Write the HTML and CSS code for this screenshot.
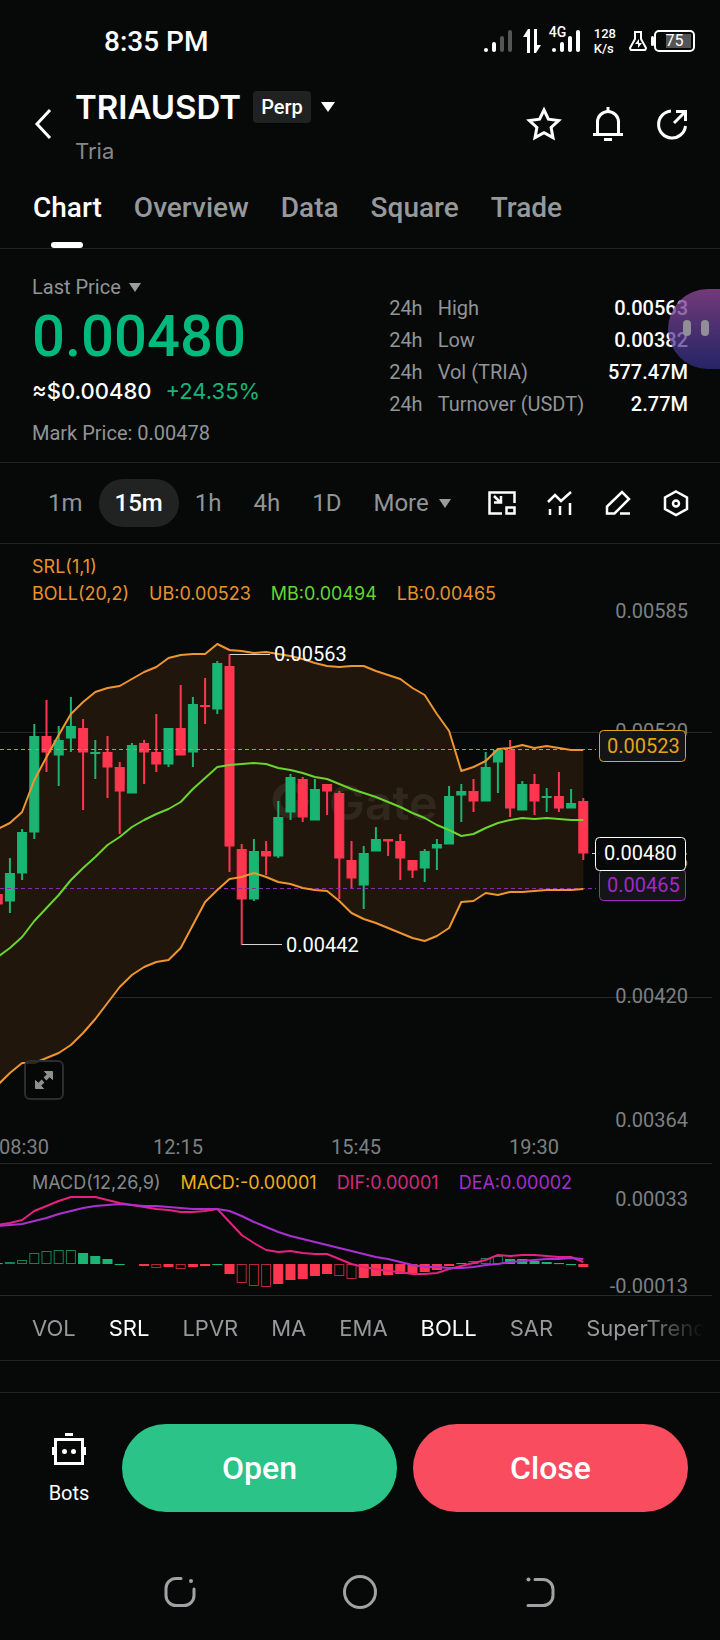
FILE: index.html
```html
<!doctype html>
<html lang="en">
  <head>
    <meta charset="UTF-8" />
    <meta name="viewport" content="width=device-width, initial-scale=1.0" />
    <title>TRIAUSDT Perp</title>
    <link rel="stylesheet" href="styles.css">
  </head>
  <body>
    <div class="status-bar">
      <span class="clock">8:35 PM</span>
      <div class="status-icons">
        <svg width="30" height="24" viewBox="0 0 30 24" fill="#fff">
          <circle cx="3" cy="21" r="2" />
          <rect x="9" y="13" width="4" height="10" rx="2" />
          <rect x="17" y="7" width="4" height="16" rx="2" fill="#555" />
          <rect x="25" y="1" width="4" height="22" rx="2" fill="#555" />
        </svg>
        <svg width="18" height="24" viewBox="0 0 18 24" fill="#fff">
          <path d="M0 8L5 0h2v24H4V8zM11 0h3v16h4l-5 8h-2z" />
        </svg>
        <div class="mobile">
          <span class="mobile-type">4G</span>
          <svg width="30" height="24" viewBox="0 0 30 24" fill="#fff">
            <circle cx="3" cy="21" r="2" />
            <rect x="9" y="13" width="4" height="10" rx="2" />
            <rect x="17" y="7" width="4" height="16" rx="2" />
            <rect x="25" y="1" width="4" height="22" rx="2" />
          </svg>
        </div>
        <span class="speed">128<br />K/s</span>
        <svg width="18" height="20" viewBox="0 0 18 20" fill="none" stroke="#fff" stroke-width="2">
          <path d="M5 1h8M6 1v7L1 17q0 1 1 2h14q1-1 1-2L12 8V1" />
          <path d="M10 8l-4 5h3v4l4-5h-3z" fill="#fff" stroke="none" />
        </svg>
        <div class="battery"><span>75</span></div>
      </div>
    </div>

    <header class="header">
      <button class="icon-btn back" aria-label="Back">
        <svg width="18" height="32" viewBox="0 0 18 32" fill="none" stroke="#fff" stroke-width="3">
          <path d="M16 2L3 16l13 14" />
        </svg>
      </button>
      <div class="pair">
        <div class="pair-row">
          <h1>TRIAUSDT</h1>
          <span class="badge">Perp</span>
          <svg width="14" height="10" viewBox="0 0 14 10" fill="#fff"><path d="M0 0h14L7 10z" /></svg>
        </div>
        <p>Tria</p>
      </div>
      <div class="header-actions">
        <button class="icon-btn" aria-label="Favourite">
          <svg width="36" height="36" viewBox="0 0 36 36" fill="none" stroke="#fff" stroke-width="3">
            <path d="M18 4l4.400 9.200 10.200 1.300-7.500 7 1.900 10.100-9-4.900-9 4.900 1.900-10.100-7.500-7 10.200-1.300z" />
          </svg>
        </button>
        <button class="icon-btn" aria-label="Alerts">
          <svg width="36" height="36" viewBox="0 0 36 36" fill="none" stroke="#fff" stroke-width="3">
            <path d="M18 1v4M7.500 29V16a10.500 10.500 0 0 1 21 0v13M3 28.500h30M14 33.500h8" />
          </svg>
        </button>
        <button class="icon-btn" aria-label="Share">
          <svg width="36" height="36" viewBox="0 0 36 36" fill="none" stroke="#fff" stroke-width="3">
            <path d="M17 5a13.500 13.500 0 1 0 14.500 15M20 17L31 6M22 5.500h9.500V15" />
          </svg>
        </button>
      </div>
    </header>

    <nav class="tabs">
      <a href="#chart" class="active">Chart</a>
      <a href="#overview">Overview</a>
      <a href="#data">Data</a>
      <a href="#square">Square</a>
      <a href="#trade">Trade</a>
    </nav>

    <section class="ticker">
      <div class="price-box">
        <button class="price-type">
          Last Price
          <svg width="12" height="9" viewBox="0 0 12 9" fill="#9a9c9d"><path d="M0 0h12L6 9z" /></svg>
        </button>
        <div class="price">0.00480</div>
        <div class="price-sub"><span>≈$0.00480</span><span class="up">+24.35%</span></div>
        <div class="mark">Mark Price: 0.00478</div>
      </div>
      <table class="stats">
        <tr><td>24h</td><td>High</td><th>0.00563</th></tr>
        <tr><td>24h</td><td>Low</td><th>0.00382</th></tr>
        <tr><td>24h</td><td>Vol (TRIA)</td><th>577.47M</th></tr>
        <tr><td>24h</td><td>Turnover (USDT)</td><th>2.77M</th></tr>
      </table>
      <button class="assistant" aria-label="Assistant"><i></i><i></i></button>
    </section>

    <div class="intervals">
      <button>1m</button>
      <button class="active">15m</button>
      <button>1h</button>
      <button>4h</button>
      <button>1D</button>
      <button>
        More
        <svg width="12" height="9" viewBox="0 0 12 9" fill="#9a9c9d"><path d="M0 0h12L6 9z" /></svg>
      </button>
      <div class="chart-tools">
        <button class="icon-btn" aria-label="Floating window">
          <svg width="28" height="28" viewBox="0 0 28 28" fill="none" stroke="#fff" stroke-width="2.500">
            <path d="M14 24.500H1.500v-21h25V14" />
            <path d="M18.500 18.500h8v6h-8z" />
            <path d="M6 7l6 6M13 7v6.500H6" />
          </svg>
        </button>
        <button class="icon-btn" aria-label="Indicators">
          <svg width="28" height="28" viewBox="0 0 28 28" fill="none" stroke="#fff" stroke-width="2.500">
            <path d="M2 13l7-7 6 6L25 3" />
            <path d="M4 20v6M14 17v9M24 14v12" />
          </svg>
        </button>
        <button class="icon-btn" aria-label="Draw">
          <svg width="28" height="28" viewBox="0 0 28 28" fill="none" stroke="#fff" stroke-width="2.500">
            <path d="M3 24.500v-7L18 3l7 7-14.500 14.500zM16 24.500h10" />
          </svg>
        </button>
        <button class="icon-btn" aria-label="Chart settings">
          <svg width="28" height="28" viewBox="0 0 28 28" fill="none" stroke="#fff" stroke-width="2.500">
            <path d="M14 2.500l11 6v11.500l-11 6-11-6V8.500z" />
            <circle cx="14" cy="14.500" r="3" />
          </svg>
        </button>
      </div>
    </div>

    <main class="chart" id="chart">
      <div class="legend main-legend">
        <div class="legend-row"><span class="orange">SRL(1,1)</span></div>
        <div class="legend-row">
          <span class="orange">BOLL(20,2)</span>
          <span class="orange">UB:0.00523</span>
          <span class="lime">MB:0.00494</span>
          <span class="orange">LB:0.00465</span>
        </div>
      </div>
      <div class="kline-box">
        <svg class="kline" viewBox="0 604 720 560">
          <g class="grid">
            <path d="M0 732.500h712M0 997.500h712M0 1163.500h712" />
          </g>
          <g class="axis">
            <text x="688" y="618">0.00585</text>
            <text x="688" y="738">0.00530</text>
            <text x="688" y="868">0.00475</text>
            <text x="688" y="1003">0.00420</text>
            <text x="688" y="1127">0.00364</text>
          </g>
          <g class="axis time">
            <text x="24" y="1154">08:30</text>
            <text x="178" y="1154">12:15</text>
            <text x="356" y="1154">15:45</text>
            <text x="534" y="1154">19:30</text>
          </g>
          <path id="band" class="band" />
          <g class="watermark">
            <path d="M301 791a14 14 0 1 0 3 13h-13" />
            <text x="329" y="820">Gate</text>
          </g>
          <g id="candles"></g>
          <path class="dash-yellow" d="M0 749.500h596" />
          <path class="dash-purple" d="M0 888.500h596" />
          <path id="upper" class="line orange-line" />
          <path id="middle" class="line lime-line" />
          <path id="lower" class="line orange-line" />
          <path class="pointer" d="M230 654.500h40M242 944.500h40M592 853.500h3" />
          <g class="pointer-text">
            <text x="274" y="661">0.00563</text>
            <text x="286" y="952">0.00442</text>
          </g>
          <g class="tag yellow">
            <rect x="599.500" y="730.500" width="86" height="31" rx="4" />
            <text x="607" y="753">0.00523</text>
          </g>
          <g class="tag purple">
            <rect x="599.500" y="869.500" width="86" height="31" rx="4" />
            <text x="607" y="892">0.00465</text>
          </g>
          <g class="tag white">
            <rect x="595.500" y="837.500" width="90" height="33" rx="4" />
            <text x="604" y="860">0.00480</text>
          </g>
        </svg>
        <button class="expand" aria-label="Full screen">
          <svg width="20" height="20" viewBox="0 0 20 20" fill="#8d8f90" stroke="#8d8f90">
            <path d="M10.500 1.500h8v8zM1.500 10.500v8h8z" />
            <path d="M15 5l-4 4M5 15l4-4" stroke-width="4" />
          </svg>
        </button>
      </div>
      <div class="legend macd-legend">
        <div class="legend-row">
          <span class="gray">MACD(12,26,9)</span>
          <span class="gold">MACD:-0.00001</span>
          <span class="pink">DIF:0.00001</span>
          <span class="violet">DEA:0.00002</span>
        </div>
      </div>
      <svg class="macd" viewBox="0 1192 720 104">
        <path class="grid" d="M0 1295.500h712" />
        <g class="axis">
          <text x="688" y="1206">0.00033</text>
          <text x="688" y="1293">-0.00013</text>
        </g>
        <g id="bars"></g>
        <path id="dif" class="line pink-line" />
        <path id="dea" class="line violet-line" />
      </svg>
    </main>

    <div class="indicator-bar">
      <div class="indicators">
        <button>VOL</button>
        <button class="active">SRL</button>
        <button>LPVR</button>
        <button>MA</button>
        <button>EMA</button>
        <button class="active">BOLL</button>
        <button>SAR</button>
        <button>SuperTrend</button>
      </div>
    </div>

    <footer class="trade-bar">
      <button class="bots">
        <svg width="36" height="36" viewBox="0 0 36 36" fill="none" stroke="#fff" stroke-width="3">
          <path d="M4.500 8.500h27v24h-27zM14 3.500h8M2.500 16v8M33.500 16v8" />
          <circle cx="13.500" cy="20.500" r="2.500" fill="#fff" stroke="none" />
          <circle cx="22.500" cy="20.500" r="2.500" fill="#fff" stroke="none" />
        </svg>
        Bots
      </button>
      <button class="trade-btn open">Open</button>
      <button class="trade-btn close">Close</button>
    </footer>

    <div class="system-nav">
      <button class="icon-btn" aria-label="Recent apps">
        <svg width="36" height="36" viewBox="0 0 36 36" fill="none" stroke="#a0a2a3" stroke-width="3" stroke-linecap="round">
          <path d="M19 4.500h-5A10 10 0 0 0 4 14.500v7a10 10 0 0 0 10 10h8a10 10 0 0 0 10-10V15" />
          <circle cx="29" cy="7" r="2" fill="#a0a2a3" stroke="none" />
        </svg>
      </button>
      <button class="icon-btn" aria-label="Home">
        <svg width="36" height="36" viewBox="0 0 36 36" fill="none" stroke="#a0a2a3" stroke-width="3">
          <circle cx="18" cy="18" r="15.500" />
        </svg>
      </button>
      <button class="icon-btn" aria-label="System back">
        <svg width="36" height="36" viewBox="0 0 36 36" fill="none" stroke="#a0a2a3" stroke-width="3" stroke-linecap="round">
          <path d="M13 5.500h8a10 10 0 0 1 10 10v6a10 10 0 0 1-10 10H6" />
          <circle cx="6.500" cy="5.500" r="2" fill="#a0a2a3" stroke="none" />
        </svg>
      </button>
    </div>
    <script src="chart.js"></script>
  </body>
</html>
```
FILE: styles.css
```css
* {
  margin: 0;
  padding: 0;
  box-sizing: border-box;
}

body {
  font-family: Roboto, sans-serif;
  background: #060908;
  color: #fff;
}

button {
  font: inherit;
  color: inherit;
  background: none;
  border: none;
  cursor: pointer;
}

a {
  color: inherit;
  text-decoration: none;
}

svg {
  display: block;
}

.icon-btn {
  display: flex;
}

/* status bar */
.status-bar {
  display: flex;
  justify-content: space-between;
  align-items: center;
  height: 80px;
  padding: 2px 25px 0 104px;
}

.clock {
  font-size: 28px;
  font-weight: 500;
}

.status-icons {
  display: flex;
  align-items: center;
  gap: 10px;
}

.mobile {
  position: relative;
}

.mobile-type {
  position: absolute;
  top: -4px;
  left: -2px;
  font-size: 14px;
  line-height: 14px;
  font-weight: 500;
}

.speed {
  margin: 0 3px;
  font-size: 13px;
  line-height: 15px;
  font-weight: 500;
}

.battery {
  position: relative;
  width: 41px;
  height: 22px;
  margin-left: -3px;
  padding: 2px;
  border: 2px solid #fff;
  border-radius: 5px;
}

.battery::before {
  content: '';
  position: absolute;
  left: -5px;
  top: 4px;
  width: 3px;
  height: 10px;
  border-radius: 2px;
  background: #fff;
}

.battery span {
  display: block;
  height: 14px;
  background: linear-gradient(90deg, transparent 25%, #555 25%);
  font-size: 16px;
  line-height: 14px;
  text-align: center;
}

/* header */
.header {
  display: flex;
  align-items: center;
  height: 88px;
  padding: 0 30px 0 34px;
}

.pair {
  flex: 1;
  padding: 10px 0 0 23px;
}

.pair-row {
  display: flex;
  align-items: center;
  gap: 10px;
}

.pair h1 {
  font-family: Inter, sans-serif;
  font-size: 33px;
  line-height: 44px;
  font-weight: 600;
}

.badge {
  margin-left: 2px;
  padding: 0 8px;
  border-radius: 4px;
  background: #202222;
  font-size: 20px;
  line-height: 32px;
  font-weight: 500;
}

.pair p {
  font-family: Inter, sans-serif;
  font-size: 22px;
  line-height: 44px;
  color: #85888a;
}

.header-actions {
  display: flex;
  gap: 28px;
}

/* tabs */
.tabs {
  display: flex;
  gap: 32px;
  height: 81px;
  padding: 0 33px;
  border-bottom: 1px solid #202323;
  font-size: 28px;
  line-height: 80px;
  font-weight: 500;
  color: #96989a;
}

.tabs .active {
  position: relative;
  color: #fff;
}

.tabs .active::after {
  content: '';
  position: absolute;
  left: 50%;
  bottom: 0;
  width: 32px;
  height: 6px;
  margin-left: -16px;
  border-radius: 3px;
  background: #fff;
}

/* ticker */
.ticker {
  position: relative;
  display: flex;
  justify-content: space-between;
  padding: 22px 32px 9px;
  border-bottom: 1px solid #202323;
  font-size: 20px;
  line-height: 32px;
  color: #929496;
}

.price-type {
  display: flex;
  align-items: center;
  gap: 8px;
}

.price {
  font-size: 58px;
  line-height: 66px;
  font-weight: 500;
  color: #00b97c;
}

.price-sub {
  display: flex;
  gap: 14px;
  font-family: Inter, sans-serif;
  font-size: 22px;
  line-height: 44px;
  font-weight: 500;
  color: #fff;
}

.price-sub .up {
  font-weight: 400;
  color: #18b37a;
}

.mark {
  line-height: 40px;
}

.stats {
  align-self: flex-start;
  margin-top: 21px;
  border-collapse: collapse;
}

.stats td {
  padding-right: 15px;
}

.stats td:nth-child(2) {
  padding-right: 24px;
}

.stats th {
  font-weight: 500;
  text-align: right;
  color: #fff;
}

.assistant {
  position: absolute;
  right: 0;
  top: 40px;
  display: flex;
  gap: 10px;
  width: 52px;
  height: 80px;
  padding: 31px 0 0 15px;
  border-radius: 40px 0 0 40px;
  background: linear-gradient(rgba(140, 70, 150, 0.8), rgba(50, 48, 140, 0.7));
}

.assistant i {
  width: 8px;
  height: 16px;
  border-radius: 4px;
  background: #918e98;
}

/* intervals */
.intervals {
  display: flex;
  align-items: center;
  height: 81px;
  padding: 0 30px 0 32px;
  border-bottom: 1px solid #202323;
  font-size: 24px;
  line-height: 48px;
  color: #929496;
}

.intervals > button {
  display: flex;
  align-items: center;
  gap: 10px;
  padding: 0 16px;
  border-radius: 24px;
}

.intervals .active {
  background: #212323;
  color: #fff;
  font-weight: 500;
}

.chart-tools {
  display: flex;
  flex: 1;
  justify-content: flex-end;
  gap: 30px;
}

/* chart */
.legend {
  padding: 0 32px;
  font-family: Inter, sans-serif;
  font-size: 18px;
}

.legend-row {
  display: flex;
  gap: 20px;
}

.main-legend {
  height: 60px;
  padding-top: 9px;
  line-height: 27px;
}

.macd-legend {
  height: 28px;
  line-height: 37px;
}

.orange {
  color: #e8922e;
}

.lime {
  color: #62d733;
}

.gray {
  color: #85888a;
}

.gold {
  color: #f0ae1d;
}

.pink {
  color: #d02a80;
}

.violet {
  color: #a32fc9;
}

.kline-box {
  position: relative;
}

.kline,
.macd {
  width: 100%;
  height: auto;
  overflow: visible;
  font-size: 20px;
}

.grid {
  stroke: #25292a;
}

.axis {
  fill: #7d8082;
  text-anchor: end;
}

.time {
  text-anchor: middle;
}

.band {
  fill: #20160b;
}

.watermark {
  fill: #fff;
  opacity: 0.07;
  font-family: Inter, sans-serif;
  font-size: 48px;
  font-weight: 600;
}

.watermark path {
  fill: none;
  stroke: #fff;
  stroke-width: 8;
}

.green-bar {
  fill: #1bb473;
  stroke: #1bb473;
}

.red-bar {
  fill: #ff3650;
  stroke: #ff3650;
}

.wick {
  stroke-width: 2;
}

.hollow {
  fill: none;
  opacity: 0.7;
}

.line {
  fill: none;
  stroke-width: 2;
  stroke-linejoin: round;
}

.orange-line {
  stroke: #ee9530;
}

.lime-line {
  stroke: #6ad52e;
}

.pink-line {
  stroke: #e6217f;
}

.violet-line {
  stroke: #ac2fd4;
}

.dash-yellow,
.dash-purple {
  stroke: #c8961f;
  stroke-dasharray: 4 3;
}

.dash-purple {
  stroke: #8f28ae;
}

.pointer {
  stroke: #d5d5d5;
}

.pointer-text {
  fill: #fff;
}

.tag rect {
  fill: #131516;
}

.yellow rect {
  stroke: #e3a41c;
}

.yellow text {
  fill: #e3a41c;
}

.purple rect {
  stroke: #a229c7;
}

.purple text {
  fill: #a229c7;
}

.white rect {
  fill: #060908;
  stroke: #fff;
}

.white text {
  fill: #fff;
}

.expand {
  position: absolute;
  left: 24px;
  bottom: 64px;
  display: flex;
  align-items: center;
  justify-content: center;
  width: 40px;
  height: 40px;
  border: 2px solid #2b2e2f;
  border-radius: 6px;
  background: rgba(6, 9, 8, 0.8);
}

/* indicator picker */
.indicator-bar {
  border-bottom: 1px solid #202323;
}

.indicators {
  display: flex;
  gap: 33px;
  height: 64px;
  margin-right: 16px;
  padding-left: 32px;
  overflow: hidden;
  font-family: Inter, sans-serif;
  font-size: 22px;
  color: #96989a;
  -webkit-mask-image: linear-gradient(90deg, #000 calc(100% - 64px), transparent);
  mask-image: linear-gradient(90deg, #000 calc(100% - 64px), transparent);
}

.indicators .active {
  color: #fff;
}

/* bottom */
.trade-bar {
  display: flex;
  gap: 16px;
  margin-top: 31px;
  padding: 31px 32px 0;
  border-top: 1px solid #202323;
}

.bots {
  display: flex;
  flex-direction: column;
  align-items: center;
  gap: 14px;
  width: 74px;
  padding-top: 7px;
  font-size: 20px;
}

.trade-btn {
  flex: 1;
  height: 88px;
  border-radius: 44px;
  font-size: 32px;
  font-weight: 500;
}

.open {
  background: #2bc387;
}

.close {
  background: #f94d5f;
}

.system-nav {
  display: flex;
  justify-content: center;
  gap: 144px;
  padding: 62px 0 30px;
}
```
FILE: chart.js
```javascript
// distance between candles and centre of candle 0
const STEP = 12.2;
const START = -2.3;
const ZERO = 1264;

// [colour, wick top, body top, body bottom, wick bottom]
const candles = [
  ['r', 890, 894, 904, 908], ['g', 858, 873, 901, 913], ['g', 829, 832, 873, 880],
  ['g', 724, 736, 832, 839], ['r', 700, 736, 752, 772], ['g', 726, 740, 755, 786],
  ['g', 697, 726, 738, 752], ['r', 719, 728, 752, 810], ['g', 740, 752, 753, 779],
  ['r', 736, 752, 767, 798], ['r', 762, 767, 791, 834], ['g', 743, 745, 793, 793],
  ['r', 740, 743, 752, 784], ['r', 714, 752, 764, 772], ['g', 728, 728, 764, 767],
  ['r', 685, 728, 755, 755], ['g', 697, 704, 752, 767], ['r', 678, 705, 706, 724],
  ['g', 661, 663, 709, 714], ['r', 654, 666, 846, 872], ['r', 844, 849, 899, 945],
  ['g', 839, 851, 899, 901], ['r', 841, 851, 856, 875], ['g', 801, 817, 856, 858],
  ['g', 774, 777, 812, 820], ['r', 777, 779, 817, 822], ['g', 779, 789, 820, 820],
  ['r', 784, 784, 791, 815], ['r', 791, 793, 858, 899], ['r', 841, 860, 878, 889],
  ['g', 846, 853, 885, 909], ['g', 827, 839, 851, 851], ['r', 839, 839, 841, 856],
  ['r', 834, 841, 858, 880], ['r', 860, 860, 870, 878], ['g', 849, 851, 868, 882],
  ['g', 839, 844, 848, 870], ['g', 786, 796, 844, 844], ['g', 784, 791, 795, 822],
  ['r', 779, 791, 801, 812], ['g', 752, 767, 801, 801], ['g', 748, 750, 762, 793],
  ['r', 740, 750, 808, 817], ['g', 781, 784, 810, 810], ['r', 774, 784, 801, 815],
  ['g', 788, 796, 797, 812], ['r', 772, 796, 808, 812], ['g', 789, 803, 808, 808],
  ['r', 798, 801, 853, 860],
];

const upper = [
  829, 823, 812, 780, 757, 735, 714, 702, 692, 688, 686, 679, 672, 667, 658, 655, 654,
  654, 644, 650, 651, 653, 652, 654, 656, 659, 663, 666, 667, 666, 666, 671, 675, 679,
  688, 695, 714, 731, 771, 767, 761, 749, 748, 745, 748, 746, 748, 750, 750,
];
const middle = [
  957, 948, 937, 921, 908, 895, 880, 868, 857, 845, 837, 827, 820, 814, 809, 802, 789,
  778, 767, 765, 764, 763, 764, 768, 770, 773, 777, 779, 784, 789, 793, 797, 802, 807,
  813, 818, 825, 830, 836, 834, 828, 823, 820, 818, 819, 818, 819, 820, 820,
];
const lower = [
  1085, 1073, 1063, 1063, 1058, 1053, 1045, 1033, 1019, 1003, 987, 975, 967, 962, 960,
  948, 925, 902, 890, 879, 877, 873, 877, 882, 884, 888, 890, 891, 901, 913, 919, 923,
  928, 933, 938, 941, 936, 928, 902, 901, 893, 895, 892, 892, 891, 890, 890, 890, 889,
];
const dif = [
  1225, 1223, 1220, 1211, 1206, 1201, 1197, 1197, 1197, 1200, 1203, 1205, 1207, 1209,
  1210, 1212, 1212, 1211, 1209, 1222, 1235, 1243, 1250, 1252, 1251, 1253, 1254, 1254,
  1259, 1264, 1267, 1269, 1271, 1272, 1274, 1274, 1273, 1269, 1266, 1263, 1260, 1255,
  1256, 1255, 1255, 1256, 1257, 1257, 1262,
];
const dea = [
  1226, 1225, 1224, 1221, 1218, 1214, 1211, 1208, 1206, 1205, 1204, 1205, 1206, 1206,
  1207, 1208, 1209, 1209, 1209, 1211, 1216, 1222, 1227, 1232, 1236, 1239, 1242, 1245,
  1248, 1251, 1254, 1257, 1259, 1262, 1265, 1267, 1267, 1268, 1268, 1267, 1265, 1264,
  1262, 1261, 1260, 1259, 1259, 1258, 1259,
];

// histogram height, up is positive
const bars = [
  1, 2, 4, 11, 13, 14, 14, 11, 8, 5, 0, 0, -2, -4, -3, -5, -3, -2, 0, -10, -19, -22, -23,
  -20, -16, -15, -12, -10, -12, -15, -14, -12, -11, -10, -9, -8, -6, -2, 1, 3, 6, 8, 5, 5,
  3, 2, 1, 0, -3,
];
const hollow = [1, 2, 3, 4, 5, 6, 13, 15, 20, 21, 22, 28, 29, 39, 40, 41];

const x = (i) => START + i * STEP;

function add(parent, tag, attrs) {
  const el = document.createElementNS('http://www.w3.org/2000/svg', tag);
  Object.entries(attrs).forEach(([key, value]) => el.setAttribute(key, value));
  document.getElementById(parent).appendChild(el);
}

function path(values) {
  return 'M' + values.map((y, i) => `${x(i).toFixed(1)} ${y}`).join('L');
}

candles.forEach(([color, high, top, bottom, low], i) => {
  const name = color === 'g' ? 'green-bar' : 'red-bar';
  add('candles', 'path', { class: `${name} wick`, d: `M${x(i)} ${high}V${low}` });
  add('candles', 'rect', {
    class: name,
    x: x(i) - 4.5,
    y: top + 0.5,
    width: 9,
    height: Math.max(bottom - top - 0.5, 1),
  });
});

bars.forEach((value, i) => {
  if (i === 11) return;
  const name = value < 0 ? 'red-bar' : 'green-bar';
  add('bars', 'rect', {
    class: hollow.includes(i) ? `${name} hollow` : name,
    x: x(i) - 4.5,
    y: value > 0 ? ZERO - value + 0.5 : ZERO + 0.5,
    width: 9,
    height: Math.max(Math.abs(value) - 1, 0.1),
  });
});

const lowerBack = lower.map((y, i) => `${x(i).toFixed(1)} ${y}`).reverse().join('L');
document.getElementById('band').setAttribute('d', `${path(upper)}L${lowerBack}Z`);
Object.entries({ upper, middle, lower, dif, dea }).forEach(([id, values]) => {
  document.getElementById(id).setAttribute('d', path(values));
});
```
